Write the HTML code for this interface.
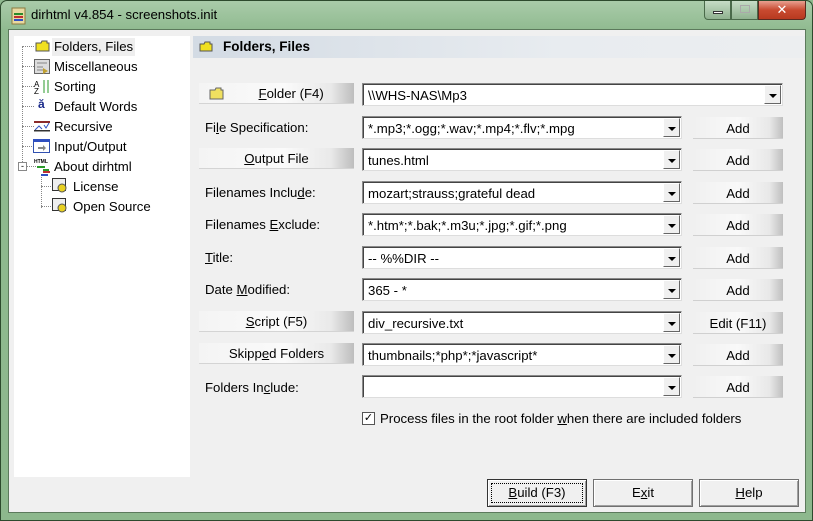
<!DOCTYPE html>
<html><head><meta charset="utf-8"><style>
*{box-sizing:border-box;margin:0;padding:0}
body{width:813px;height:521px;overflow:hidden;background:#8fb98f;font-family:"Liberation Sans","DejaVu Sans",sans-serif;font-size:13.2px;color:#000;position:relative}
.win{position:absolute;left:0;top:0;width:813px;height:521px;border:1px solid #2d4a2d;border-radius:7px 7px 0 0;background:linear-gradient(#a9cba9,#8fba8f 30px,#8db88d)}
.title{position:absolute;left:30px;top:6px;font-size:13.2px;color:#000}
.client{position:absolute;left:8px;top:29px;width:798px;height:484px;background:#f0f0f0;border:1px solid #5c7a5c}
.abs{position:absolute}
.tree{position:absolute;left:14px;top:36px;width:176px;height:441px;background:#fff}
.ti{position:absolute;height:18px;line-height:18px;white-space:nowrap}
.hdr{position:absolute;left:193px;top:36px;width:612px;height:22px;background:linear-gradient(90deg,#d3dbe4,#e8ecf0 60%,#eceef0);font-weight:bold;font-size:13.5px;line-height:22px;padding-left:30px}
.lbtn{position:absolute;left:199px;width:155px;height:21px;background:linear-gradient(90deg,#f4f4f4,#fafafa 55%,#e9e9e9 85%,#bdbdbd);border-bottom:1px solid #d4d4d4;text-align:center;line-height:21px}
.lbl{position:absolute;left:205px;line-height:18px}
.cb{position:absolute;left:362px;width:320px;height:23px;background:#fff;border:1px solid #8a8a8a;border-right-color:#ddd;border-bottom-color:#ddd;box-shadow:inset 1px 1px 0 #444;line-height:22px;padding-left:5px;padding-top:1px}
.cb .dd{position:absolute;right:1px;top:1px;width:17px;height:19px;background:#f0f0f0;border:1px solid #fff;border-right-color:#666;border-bottom-color:#666}
.cb .dd:after{content:"";position:absolute;left:4px;top:8px;border-left:4px solid transparent;border-right:4px solid transparent;border-top:4px solid #000}
.add{position:absolute;left:693px;width:90px;height:22px;background:linear-gradient(90deg,#f0f0f0,#f9f9f9 50%,#e8e8e8 85%,#bfbfbf);border-bottom:1px solid #d0d0d0;text-align:center;line-height:23px}
.bb{position:absolute;top:479px;height:28px;width:100px;border:1px solid #707070;background:#f0f0f0;box-shadow:inset 1px 1px 0 #fff,inset -1px -1px 0 #a0a0a0;text-align:center;line-height:26px}
u{text-decoration:underline}
.dot{position:absolute;border-color:#888;border-style:dotted;border-width:0}
</style></head><body>
<div class="win">
<svg class="abs" style="left:10px;top:6px" width="16" height="18"><rect x="1" y="1" width="13" height="16" fill="#e8d9a0" stroke="#8a7a40"/><rect x="3" y="6" width="9" height="2" fill="#2a8a2a"/><rect x="3" y="9" width="9" height="2" fill="#c03030"/><rect x="3" y="12" width="9" height="2" fill="#3050c0"/></svg>
<div class="title">dirhtml v4.854 - screenshots.init</div>
<div class="abs" style="left:703px;top:0;width:27px;height:19px;border:1px solid #4a6a4a;border-top:0;border-radius:0 0 0 4px;background:linear-gradient(#c6dcc6,#8fb28f)"><div class="abs" style="left:8px;top:10px;width:10px;height:3px;background:#fff;border:1px solid #333"></div></div>
<div class="abs" style="left:730px;top:0;width:27px;height:19px;border:1px solid #4a6a4a;border-top:0;background:linear-gradient(#c6dcc6,#8fb28f)"><div class="abs" style="left:8px;top:4px;width:10px;height:8px;border:1px solid #aaa"></div></div>
<div class="abs" style="left:757px;top:0;width:48px;height:19px;border:1px solid #5a2a20;border-top:0;border-radius:0 0 4px 0;background:linear-gradient(#e8a090,#c84a30 50%,#b83a20);color:#fff;text-align:center;font-weight:bold;font-size:13px;line-height:17px">✕</div>
</div>
<div class="client"></div>
<div class="tree">
<div class="dot" style="left:8px;top:10px;height:122px;border-left-width:1px"></div>
<div class="dot" style="left:8px;top:10px;width:12px;border-top-width:1px"></div>
<div class="dot" style="left:8px;top:30px;width:12px;border-top-width:1px"></div>
<div class="dot" style="left:8px;top:50px;width:12px;border-top-width:1px"></div>
<div class="dot" style="left:8px;top:70px;width:12px;border-top-width:1px"></div>
<div class="dot" style="left:8px;top:90px;width:12px;border-top-width:1px"></div>
<div class="dot" style="left:8px;top:110px;width:12px;border-top-width:1px"></div>
<div class="dot" style="left:12px;top:130px;width:10px;border-top-width:1px"></div>
<div class="dot" style="left:27px;top:138px;height:34px;border-left-width:1px"></div>
<div class="dot" style="left:27px;top:150px;width:12px;border-top-width:1px"></div>
<div class="dot" style="left:27px;top:170px;width:12px;border-top-width:1px"></div>
<div class="abs" style="left:4px;top:126px;width:9px;height:9px;border:1px solid #888;background:#fff;font-size:9px;line-height:6px;text-align:center">-</div>
<svg class="abs" style="left:21px;top:4px" width="16" height="12"><path d="M1 3h5l1-2h5v2h2v8H1z" fill="#f0e020" stroke="#555"/></svg>
<svg class="abs" style="left:20px;top:23px" width="16" height="15"><rect x="0.5" y="0.5" width="15" height="14" fill="#ddd" stroke="#666"/><path d="M3 4h10M3 8h6M3 11h6" stroke="#888"/><path d="M9 9l5 3-5 3z" fill="#c0a030"/></svg>
<svg class="abs" style="left:20px;top:43px" width="16" height="15"><text x="0" y="8" font-size="8" font-family="Liberation Sans">A</text><text x="0" y="15" font-size="8" font-family="Liberation Sans">Z</text><path d="M10 1v13M14 1v13" stroke="#2a9a2a"/></svg>
<div class="abs" style="left:24px;top:61px;font-weight:bold;color:#1a2a8a;font-size:12px">ă</div>
<svg class="abs" style="left:20px;top:84px" width="16" height="12"><rect x="0" y="1" width="16" height="2" fill="#8a2a2a"/><path d="M1 10l4-4 3 3M10 5l2 3 3-5" stroke="#3050c0" fill="none"/><rect x="0" y="10" width="16" height="1.5" fill="#333"/></svg>
<svg class="abs" style="left:19px;top:103px" width="17" height="14"><rect x="0.5" y="0.5" width="16" height="13" fill="#fff" stroke="#3050b0"/><rect x="0" y="0" width="17" height="3" fill="#3050c0"/><path d="M5 8h5v-2l3 3-3 3v-2H5z" fill="#888"/></svg>
<svg class="abs" style="left:20px;top:122px" width="18" height="18"><text x="0" y="5" font-size="5" font-weight="bold" font-family="Liberation Sans">HTML</text><path d="M3 9h8M9 12h6" stroke="#2a9a2a" stroke-width="2"/><path d="M9 14h7" stroke="#c03030" stroke-width="2"/><path d="M7 17h7" stroke="#3050c0" stroke-width="2"/></svg>
<svg class="abs" style="left:38px;top:142px" width="16" height="16"><rect x="0.5" y="0.5" width="13" height="12" fill="#eee" stroke="#333"/><circle cx="10" cy="10" r="4" fill="#e8d020" stroke="#555"/></svg>
<svg class="abs" style="left:38px;top:162px" width="16" height="16"><rect x="0.5" y="0.5" width="13" height="12" fill="#eee" stroke="#333"/><circle cx="10" cy="10" r="4" fill="#e8d020" stroke="#555"/></svg>
<div class="ti" style="left:38px;top:2px;background:#eee;padding:0 2px">Folders, Files</div>
<div class="ti" style="left:40px;top:22px">Miscellaneous</div>
<div class="ti" style="left:40px;top:42px">Sorting</div>
<div class="ti" style="left:40px;top:62px">Default Words</div>
<div class="ti" style="left:40px;top:82px">Recursive</div>
<div class="ti" style="left:40px;top:102px">Input/Output</div>
<div class="ti" style="left:40px;top:122px">About dirhtml</div>
<div class="ti" style="left:59px;top:142px">License</div>
<div class="ti" style="left:59px;top:162px">Open Source</div>
</div>
<div class="hdr">Folders, Files</div>
<svg class="abs" style="left:199px;top:41px" width="14" height="11"><path d="M1 3h4l1-2h5v2h2v7H1z" fill="#f0e020" stroke="#555"/></svg>

<div class="lbtn" style="top:83px">&nbsp;&nbsp;&nbsp;&nbsp;&nbsp;&nbsp;&nbsp;&nbsp;<u>F</u>older (F4)</div>
<svg class="abs" style="left:209px;top:87px" width="16" height="13"><path d="M1 3h5l1-2h5v2h2v9H1z" fill="#f0e060" stroke="#666"/></svg>
<div class="cb" style="top:83px;width:421px">\\WHS-NAS\Mp3<div class="dd"></div></div>

<div class="lbl" style="top:119px">Fi<u>l</u>e Specification:</div>
<div class="cb" style="top:116px">*.mp3;*.ogg;*.wav;*.mp4;*.flv;*.mpg<div class="dd"></div></div>
<div class="add" style="top:117px">Add</div>

<div class="lbtn" style="top:148px"><u>O</u>utput File</div>
<div class="cb" style="top:148px">tunes.html<div class="dd"></div></div>
<div class="add" style="top:149px">Add</div>

<div class="lbl" style="top:184px">Filenames Inclu<u>d</u>e:</div>
<div class="cb" style="top:181px">mozart;strauss;grateful dead<div class="dd"></div></div>
<div class="add" style="top:182px">Add</div>

<div class="lbl" style="top:216px">Filenames <u>E</u>xclude:</div>
<div class="cb" style="top:213px">*.htm*;*.bak;*.m3u;*.jpg;*.gif;*.png<div class="dd"></div></div>
<div class="add" style="top:214px">Add</div>

<div class="lbl" style="top:249px"><u>T</u>itle:</div>
<div class="cb" style="top:246px">-- %%DIR --<div class="dd"></div></div>
<div class="add" style="top:247px">Add</div>

<div class="lbl" style="top:281px">Date <u>M</u>odified:</div>
<div class="cb" style="top:278px">365 - *<div class="dd"></div></div>
<div class="add" style="top:279px">Add</div>

<div class="lbtn" style="top:311px"><u>S</u>cript (F5)</div>
<div class="cb" style="top:311px">div_recursive.txt<div class="dd"></div></div>
<div class="add" style="top:312px">Edit (F11)</div>

<div class="lbtn" style="top:343px">Skipp<u>e</u>d Folders</div>
<div class="cb" style="top:343px">thumbnails;*php*;*javascript*<div class="dd"></div></div>
<div class="add" style="top:344px">Add</div>

<div class="lbl" style="top:379px">Folders In<u>c</u>lude:</div>
<div class="cb" style="top:375px"><div class="dd"></div></div>
<div class="add" style="top:376px">Add</div>

<div class="abs" style="left:362px;top:412px;width:13px;height:13px;border:1px solid #555;background:#fff;font-size:11px;line-height:11px;text-align:center;font-weight:bold">✓</div>
<div class="abs" style="left:380px;top:410px;line-height:17px">Process files in the root folder <u>w</u>hen there are included folders</div>

<div class="bb" style="left:487px;border-color:#333"><div style="position:absolute;left:3px;top:3px;right:3px;bottom:3px;border:1px dotted #000"></div><u>B</u>uild (F3)</div>
<div class="bb" style="left:593px">E<u>x</u>it</div>
<div class="bb" style="left:699px"><u>H</u>elp</div>
</body></html>
